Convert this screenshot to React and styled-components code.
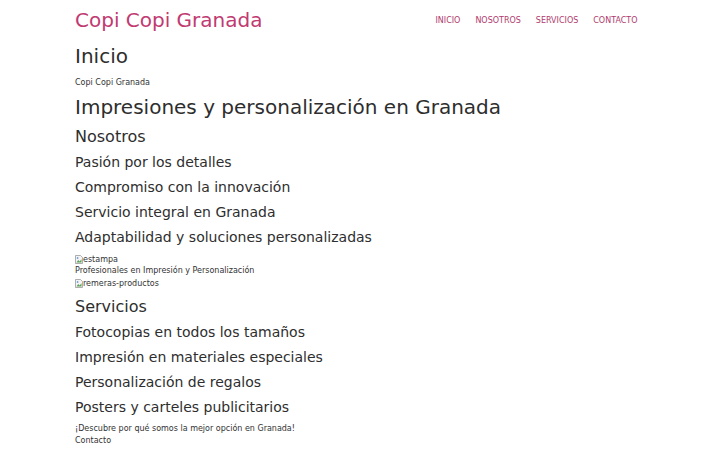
import React from "react";
import styled, { createGlobalStyle } from "styled-components";

const GlobalStyle = createGlobalStyle`
  body {
    margin: 0;
    background: #ffffff;
    font-family: "DejaVu Sans", "Liberation Sans", sans-serif;
    color: #333333;
  }
`;

const nosotros = [
  "Pasión por los detalles",
  "Compromiso con la innovación",
  "Servicio integral en Granada",
  "Adaptabilidad y soluciones personalizadas",
];

const servicios = [
  "Fotocopias en todos los tamaños",
  "Impresión en materiales especiales",
  "Personalización de regalos",
  "Posters y carteles publicitarios",
];

const links = ["INICIO", "NOSOTROS", "SERVICIOS", "CONTACTO"];

const BrokenImage = ({ alt }) => (
  <ImageRow>
    <svg width="8" height="9" viewBox="0 0 8 9" aria-hidden="true">
      <path d="M0.5 0.5 H5.5 L7.5 2.5 V8.5 H0.5 Z" fill="#f4f4f4" stroke="#9a9a9a" strokeWidth="0.8" />
      <path d="M1.5 7.5 L3.2 5 L4.6 6.4 L6.5 4.2 V7.5 Z" fill="#5aa05a" />
      <circle cx="2.6" cy="3" r="0.9" fill="#6aa0d8" />
    </svg>
    <span>{alt}</span>
  </ImageRow>
);

export default function App() {
  return (
    <>
      <GlobalStyle />
      <Container>
        <Header>
          <Brand>Copi Copi Granada</Brand>
          <Nav>
            {links.map((l) => (
              <NavLink key={l}>{l}</NavLink>
            ))}
          </Nav>
        </Header>

        <PageTitle>Inicio</PageTitle>
        <Small $top={10}>Copi Copi Granada</Small>
        <PageTitle $top={7}>Impresiones y personalización en Granada</PageTitle>

        <Section>Nosotros</Section>
        <List>
          {nosotros.map((t) => (
            <Item key={t}>{t}</Item>
          ))}
        </List>
        <SmallGroup>
          <BrokenImage alt="estampa" />
          <Small>Profesionales en Impresión y Personalización</Small>
          <BrokenImage alt="remeras-productos" />
        </SmallGroup>

        <Section>Servicios</Section>
        <List>
          {servicios.map((t) => (
            <Item key={t}>{t}</Item>
          ))}
        </List>
        <SmallGroup>
          <Small>¡Descubre por qué somos la mejor opción en Granada!</Small>
          <Small>Contacto</Small>
        </SmallGroup>
      </Container>
    </>
  );
}

const Container = styled.div`
  width: 570px;
  margin: 0 auto;
`;

const Header = styled.header`
  height: 40px;
  display: flex;
  align-items: center;
  justify-content: space-between;
`;

const Brand = styled.div`
  font-size: 20px;
  color: #c13a72;
  line-height: 24px;
`;

const Nav = styled.nav`
  display: flex;
  align-items: center;
`;

const NavLink = styled.a`
  font-size: 8px;
  color: #b03a6e;
  padding: 0 7.5px;
  text-decoration: none;
`;

const PageTitle = styled.h1`
  margin: ${(p) => p.$top ?? 4}px 0 0;
  font-size: 20px;
  font-weight: 400;
  line-height: 24px;
  color: #2e2e2e;
`;

const Small = styled.div`
  margin-top: ${(p) => p.$top ?? 0}px;
  font-size: 8px;
  line-height: ${(p) => (p.$top ? 10 : 12)}px;
  color: #333333;
`;

const Section = styled.h2`
  margin: 8px 0 0;
  font-size: 16px;
  font-weight: 400;
  line-height: 20px;
  color: #2e2e2e;
`;

const List = styled.div`
  margin-top: 3px;
`;

const Item = styled.h3`
  margin: 0;
  font-size: 14px;
  font-weight: 400;
  line-height: 25px;
  color: #2e2e2e;
`;

const SmallGroup = styled.div`
  margin-top: 3px;
`;

const ImageRow = styled.div`
  display: flex;
  align-items: center;
  height: 12px;
  font-size: 8px;
  color: #333333;

  svg {
    flex: none;
  }
`;
